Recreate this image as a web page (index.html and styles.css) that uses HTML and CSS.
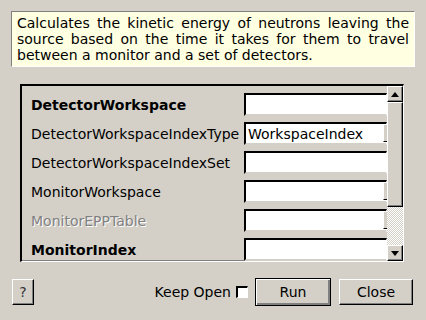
FILE: index.html
```html
<!DOCTYPE html>
<html lang="en">
<head>
  <meta charset="UTF-8" />
  <title>Algorithm dialog</title>
  <link rel="stylesheet" href="styles.css">
</head>
<body>
  <div class="dialog">
    <p class="desc">Calculates the kinetic energy of neutrons leaving the source based on the time it takes for them to travel between a monitor and a set of detectors.</p>

    <div class="props">
      <div class="rows">
        <div class="row">
          <span class="label bold">DetectorWorkspace</span>
          <span class="field"></span>
        </div>
        <div class="row">
          <span class="label">DetectorWorkspaceIndexType</span>
          <span class="field">WorkspaceIndex<i class="combo"></i></span>
        </div>
        <div class="row">
          <span class="label">DetectorWorkspaceIndexSet</span>
          <span class="field"></span>
        </div>
        <div class="row">
          <span class="label">MonitorWorkspace</span>
          <span class="field"><i class="combo"></i></span>
        </div>
        <div class="row">
          <span class="label disabled">MonitorEPPTable</span>
          <span class="field"><i class="combo"></i></span>
        </div>
        <div class="row">
          <span class="label bold">MonitorIndex</span>
          <span class="field"></span>
        </div>
      </div>
      <div class="scrollbar">
        <div class="sb-btn"><svg width="8" height="5" viewBox="0 0 8 5"><path d="M0 5 L4 0 L8 5 Z" fill="#000"/></svg></div>
        <div class="sb-thumb"></div>
        <div class="sb-track"></div>
        <div class="sb-btn"><svg width="8" height="5" viewBox="0 0 8 5"><path d="M0 0 L8 0 L4 5 Z" fill="#000"/></svg></div>
      </div>
    </div>

    <div class="actions">
      <button class="btn help">?</button>
      <label class="keep">Keep Open <span class="check"></span></label>
      <button class="btn run">Run</button>
      <button class="btn close">Close</button>
    </div>
  </div>
</body>
</html>
```

FILE: styles.css
```css
body {
  margin: 0;
  background-color: #d4d0c8;
  font-family: 'DejaVu Sans', 'Liberation Sans', sans-serif;
  font-size: 14px;
  color: #000;
}
.dialog {
  width: 426px;
  height: 320px;
  box-sizing: border-box;
  padding-top: 11px;
}
.desc {
  margin: 0 11px 0 11px;
  height: 56px;
  box-sizing: border-box;
  padding: 3px 5px 0 5px;
  background-color: #ffffe1;
  border-top: 1px solid #808080;
  border-left: 1px solid #808080;
  border-right: 1px solid #fff;
  border-bottom: 1px solid #fff;
  text-align: justify;
  line-height: 16px;
}
.props {
  margin: 17px 0 0 20px;
  width: 384px;
  height: 178px;
  box-sizing: border-box;
  border-top: 2px solid #000;
  border-left: 2px solid #000;
  border-right: 1px solid #fff;
  border-bottom: 1px solid #fff;
  box-shadow: inset -1px -1px 0 #808080;
  display: flex;
  overflow: hidden;
}
.rows {
  flex: 1;
  display: flex;
  flex-direction: column;
  gap: 6px;
  padding: 7px 0 0 9px;
  overflow: hidden;
}
.row {
  display: flex;
  align-items: center;
  height: 23px;
  flex-shrink: 0;
}
.label {
  width: 213px;
  white-space: nowrap;
}
.bold {
  font-weight: bold;
}
.disabled {
  color: #808080;
  text-shadow: 1px 1px 0 #fff;
}
.field {
  position: relative;
  flex: 1;
  height: 23px;
  box-sizing: border-box;
  background-color: #fff;
  border-top: 2px solid #000;
  border-left: 2px solid #000;
  border-right: 1px solid #fff;
  border-bottom: 2px solid #d4d0c8;
  padding: 1px 0 0 2px;
  white-space: nowrap;
  line-height: 18px;
}
.combo {
  position: absolute;
  right: -1px;
  top: 1px;
  bottom: 1px;
  width: 3px;
  background-color: #d4d0c8;
  border-left: 1px solid #fff;
  border-bottom: 1px solid #000;
}
.scrollbar {
  width: 16px;
  display: flex;
  flex-direction: column;
  flex-shrink: 0;
}
.sb-btn {
  height: 16px;
  box-sizing: border-box;
  background-color: #d4d0c8;
  border-top: 1px solid #fff;
  border-left: 1px solid #fff;
  border-right: 1px solid #000;
  border-bottom: 1px solid #000;
  box-shadow: inset -1px -1px 0 #808080;
  display: flex;
  align-items: center;
  justify-content: center;
}
.sb-thumb {
  height: 105px;
  box-sizing: border-box;
  background-color: #d4d0c8;
  border-top: 1px solid #fff;
  border-left: 1px solid #fff;
  border-right: 1px solid #000;
  border-bottom: 1px solid #000;
  box-shadow: inset -1px -1px 0 #808080;
}
.sb-track {
  flex: 1;
  background-color: #e8e6e2;
  background-image: repeating-conic-gradient(#d4d0c8 0 25%, #fff 0 50%);
  background-size: 2px 2px;
}
.actions {
  display: flex;
  align-items: center;
  margin-top: 16px;
  padding: 0 13px 0 12px;
}
.btn {
  font-family: inherit;
  font-size: 14px;
  color: #000;
  background-color: #d4d0c8;
  height: 26px;
  box-sizing: border-box;
  border-top: 1px solid #fff;
  border-left: 1px solid #fff;
  border-right: 1px solid #000;
  border-bottom: 1px solid #000;
  box-shadow: inset -1px -1px 0 #808080;
  padding: 0;
}
.help {
  width: 22px;
  color: #333;
}
.keep {
  margin-left: auto;
  display: flex;
  align-items: center;
  gap: 5px;
}
.check {
  width: 12px;
  height: 12px;
  box-sizing: border-box;
  background-color: #fff;
  border-top: 2px solid #000;
  border-left: 2px solid #000;
  border-right: 1px solid #fff;
  border-bottom: 1px solid #fff;
}
.run {
  width: 76px;
  height: 28px;
  margin-left: 7px;
  border: 1px solid #000;
  box-shadow: inset 1px 1px 0 #fff, inset -2px -2px 0 #808080;
}
.close {
  width: 74px;
  margin-left: 8px;
}
```
